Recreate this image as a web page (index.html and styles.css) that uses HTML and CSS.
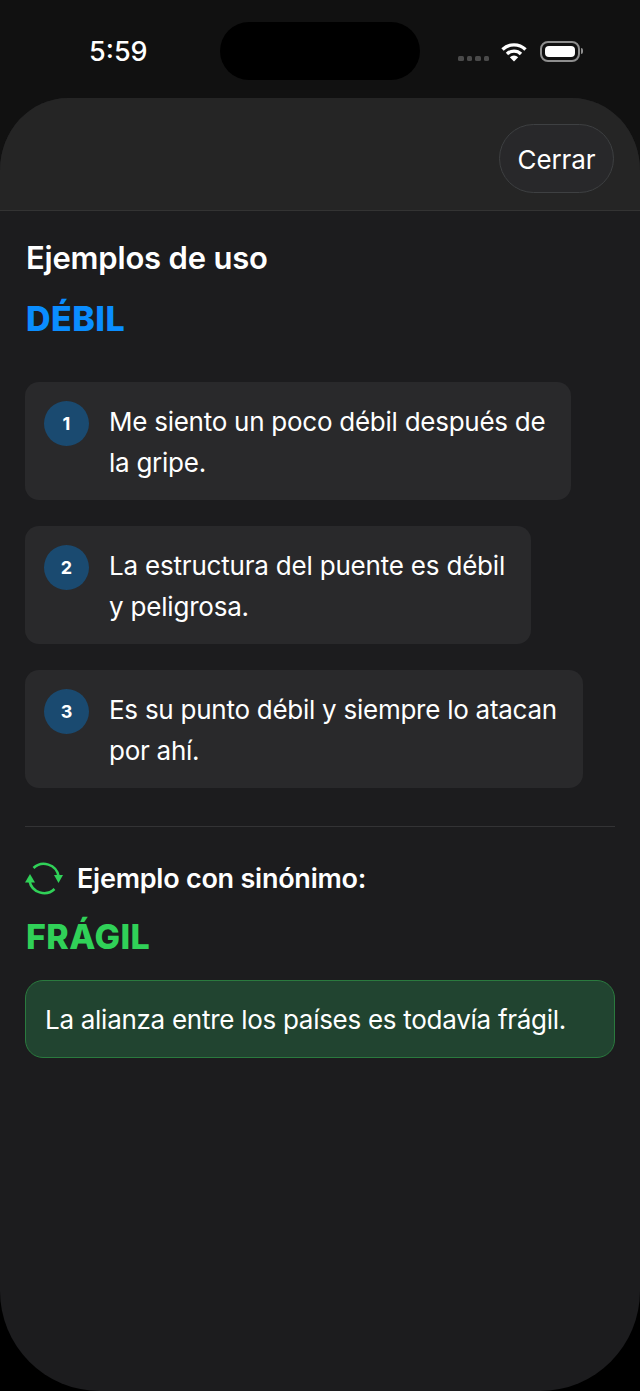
FILE: index.html
```html
<!DOCTYPE html>
<html>
<head>
<meta name="viewport" content="width=device-width, initial-scale=1">
<link rel="stylesheet" href="styles.css">
</head>
<body>

<div class="status">
  <span class="time">5:59</span>
  <div class="island"></div>
  <div class="status-icons">
    <div class="dots"><i></i><i></i><i></i><i></i></div>
    <svg class="wifi" width="26" height="20" viewBox="0 0 26 20">
      <path d="M1.5 7.5 A16.5 16.5 0 0 1 24.5 7.5" fill="none" stroke="#fff" stroke-width="3.4"/>
      <path d="M6 12 A10 10 0 0 1 20 12" fill="none" stroke="#fff" stroke-width="3.4"/>
      <path d="M8.8 15.2 L13 19.6 L17.2 15.2 A6 6 0 0 0 8.8 15.2 Z" fill="#fff"/>
    </svg>
    <div class="battery"><div class="battery-fill"></div></div>
    <div class="battery-cap"></div>
  </div>
</div>

<div class="sheet">
  <div class="sheet-head">
    <button class="close">Cerrar</button>
  </div>

  <div class="content">
    <h2 class="title">Ejemplos de uso</h2>
    <div class="word blue">DÉBIL</div>

    <div class="examples">
      <div class="example">
        <span class="num">1</span>
        <p>Me siento un poco débil después de<br>la gripe.</p>
      </div>
      <div class="example">
        <span class="num">2</span>
        <p>La estructura del puente es débil<br>y peligrosa.</p>
      </div>
      <div class="example">
        <span class="num">3</span>
        <p>Es su punto débil y siempre lo atacan<br>por ahí.</p>
      </div>
    </div>

    <div class="divider"></div>

    <div class="syn-head">
      <svg width="38" height="33" viewBox="0 0 38 33">
        <path d="M8.5 6 A15 15 0 0 1 33.5 14" fill="none" stroke="#30d158" stroke-width="2.6"/>
        <path d="M29.5 27 A15 15 0 0 1 4.5 19" fill="none" stroke="#30d158" stroke-width="2.6"/>
        <path d="M29 13 L38 13 L33.5 21 Z" fill="#30d158"/>
        <path d="M0 20.5 L10 20.5 L5 12 Z" fill="#30d158"/>
      </svg>
      <span>Ejemplo con sinónimo:</span>
    </div>
    <div class="word green">FRÁGIL</div>

    <div class="syn-box">La alianza entre los países es todavía frágil.</div>
  </div>
</div>

</body>
</html>
```

FILE: styles.css
```css
* {box-sizing: border-box;}

html, body {
  margin: 0;
  height: 100%;
}

body {
  font-family: Inter, "Liberation Sans", sans-serif;
  color: #fff;
  background: linear-gradient(#111111 50%, #000000 50%);
  overflow: hidden;
}

/* Status bar */
.status {
  height: 98px;
  position: relative;
  display: flex;
  align-items: flex-start;
}

.time {
  margin: 37px 0 0 89px;
  font-size: 27px;
  line-height: 30px;
  font-weight: 500;
}

.island {
  position: absolute;
  left: 220px;
  top: 22px;
  width: 200px;
  height: 58px;
  border-radius: 29px;
  background: #000;
}

.status-icons {
  margin: 41px 0 0 auto;
  padding-right: 57px;
  display: flex;
  align-items: flex-start;
}

.dots {
  display: flex;
  gap: 3px;
  margin: 15px 12px 0 0;
}

.dots i {
  width: 5.5px;
  height: 5px;
  border-radius: 1.5px;
  background: #4a4a4a;
}

.wifi {
  margin-top: 1px;
}

.battery {
  width: 40px;
  height: 21px;
  margin-left: 13px;
  padding: 3px;
  border: 2px solid #8e8e8e;
  border-radius: 8px;
}

.battery-fill {
  height: 100%;
  border-radius: 4px;
  background: #fff;
}

.battery-cap {
  width: 2px;
  height: 6px;
  margin: 7px 0 0 1px;
  border-radius: 0 2px 2px 0;
  background: #8e8e8e;
}

/* Sheet */
.sheet {
  height: 1293px;
  background: #1c1c1e;
  border-radius: 68px 68px 100px 100px / 72px 72px 100px 100px;
  overflow: hidden;
}

.sheet-head {
  height: 113px;
  padding: 26px 26px 0 0;
  display: flex;
  justify-content: flex-end;
  align-items: flex-start;
  background: #252525;
  border-bottom: 1px solid #333333;
}

.close {
  width: 115px;
  height: 69px;
  border: 1px solid #3e4042;
  border-radius: 35px;
  background: #28282a;
  color: #fff;
  font-family: inherit;
  font-size: 26px;
  letter-spacing: -0.1px;
  padding: 2px 0 0 0;
}

.content {
  padding: 29px 25px 0 25px;
}

.title {
  margin: 0 0 0 1px;
  font-size: 31px;
  line-height: 36px;
  font-weight: 600;
  letter-spacing: -0.2px;
}

.word {
  margin-left: 1px;
  font-size: 34px;
  line-height: 40px;
  font-weight: 800;
  letter-spacing: 0.45px;
}

.blue {
  color: #0a8dff;
  margin-top: 23px;
}

.green {
  color: #30d158;
  margin-top: 22px;
}

.examples {
  margin-top: 43px;
  display: flex;
  flex-direction: column;
  align-items: flex-start;
  gap: 26px;
}

.example {
  display: flex;
  align-items: flex-start;
  gap: 20px;
  padding: 19px 26px 17px 19px;
  border-radius: 14px;
  background: #29292b;
}

.example p {
  margin: 0;
  font-size: 26px;
  line-height: 41px;
  letter-spacing: -0.26px;
}

.example:nth-child(2) p {
  letter-spacing: -0.2px;
}

.num {
  flex: none;
  width: 45px;
  height: 45px;
  border-radius: 50%;
  background: #1a4a70;
  display: flex;
  align-items: center;
  justify-content: center;
  font-size: 18px;
  font-weight: 700;
}

.divider {
  height: 1px;
  margin-top: 38px;
  background: #333335;
}

.syn-head {
  margin-top: 35px;
  display: flex;
  align-items: center;
  gap: 14px;
  font-size: 27px;
  font-weight: 600;
  letter-spacing: -0.24px;
}

.syn-box {
  margin-top: 23px;
  padding: 1px 19px 0 19px;
  height: 78px;
  display: flex;
  align-items: center;
  border: 1px solid #2a7a3e;
  border-radius: 18px;
  background: #214430;
  font-size: 26px;
  letter-spacing: -0.28px;
}
```
